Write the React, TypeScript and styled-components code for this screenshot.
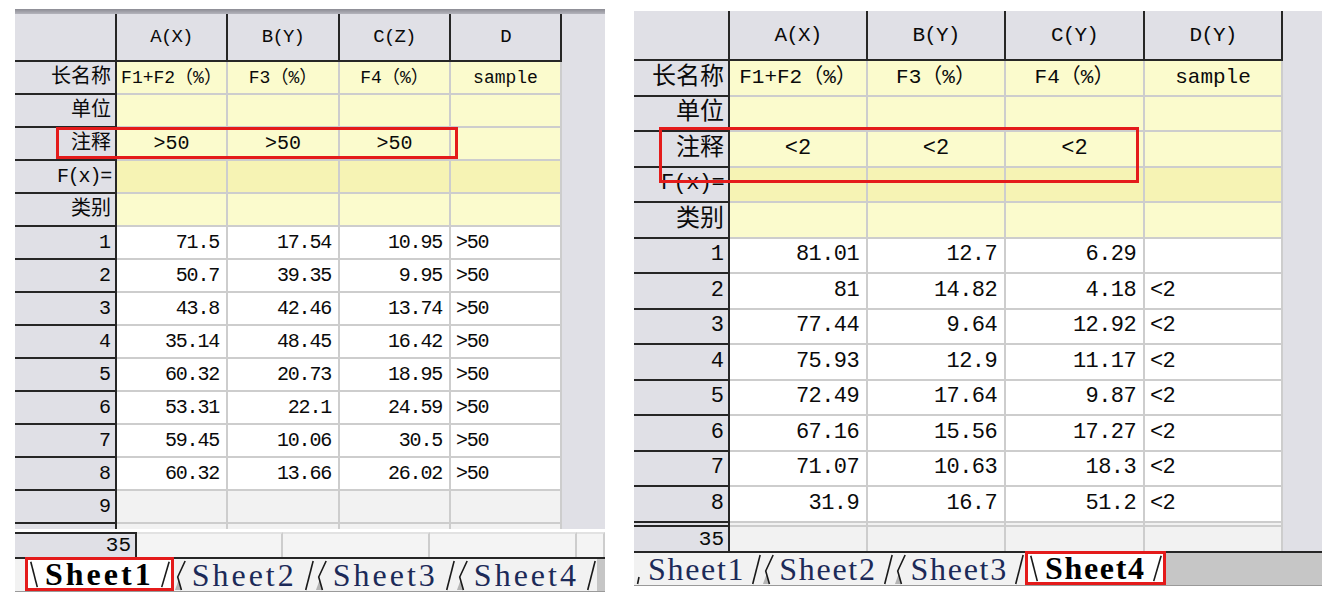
import React, { Fragment } from 'react'
import styled, { createGlobalStyle } from 'styled-components'

type Align = 'left' | 'center' | 'right'
type Kind = 'corner' | 'colhead' | 'rowhead' | 'meta' | 'fx' | 'data' | 'blank'
type EdgeKind = 'slash' | 'back' | 'curl' | 'tick'

interface TabInfo {
  name: string
  lead: EdgeKind
  selected?: boolean
}

interface Sheet {
  top: number
  width: number
  cols: number[]
  rows: string
  headFont: number
  metaFont: number
  labelFont: number
  numFont: number
  numSpacing: number
  heads: string[]
  longNames: string[]
  notes: string[]
  data: string[][]
  tabs: TabInfo[]
  tabSpacing: number
  tabPad: number
  tabSelPad: number
  tabLead: number
  box: { x: number; y: number; w: number; h: number }
}

const LABELS = ['长名称', '单位', '注释', 'F(x)=', '类别']
const isCjk = (s: string) => /[\u4e00-\u9fff]/.test(s)

const palette = {
  head: '#e0e0e6',
  meta: '#fbfbcd',
  fx: '#f6f3b4',
  data: '#ffffff',
  blank: '#f2f2f2',
  dark: '#262626',
  line: '#cdcdcd',
  red: '#e41b1b'
}

const bgFor = (k: Kind) =>
  k === 'meta' ? palette.meta
    : k === 'fx' ? palette.fx
    : k === 'data' ? palette.data
    : k === 'blank' ? palette.blank
    : palette.head

const isHead = (k: Kind) => k === 'corner' || k === 'colhead' || k === 'rowhead'

const leftSheet: Sheet = {
  top: 9,
  width: 590,
  cols: [102, 111, 112, 111, 111, 43],
  rows: '48px repeat(14, 33px) 5px',
  headFont: 19,
  metaFont: 18,
  labelFont: 20,
  numFont: 20,
  numSpacing: -1.2,
  heads: ['A(X)', 'B(Y)', 'C(Z)', 'D'],
  longNames: ['F1+F2（%）', 'F3（%）', 'F4（%）', 'sample'],
  notes: ['>50', '>50', '>50', ''],
  data: [
    ['71.5', '17.54', '10.95', '>50'],
    ['50.7', '39.35', '9.95', '>50'],
    ['43.8', '42.46', '13.74', '>50'],
    ['35.14', '48.45', '16.42', '>50'],
    ['60.32', '20.73', '18.95', '>50'],
    ['53.31', '22.1', '24.59', '>50'],
    ['59.45', '10.06', '30.5', '>50'],
    ['60.32', '13.66', '26.02', '>50']
  ],
  tabs: [
    { name: 'Sheet1', lead: 'back', selected: true },
    { name: 'Sheet2', lead: 'curl' },
    { name: 'Sheet3', lead: 'curl' },
    { name: 'Sheet4', lead: 'curl' }
  ],
  tabSpacing: 3,
  tabPad: 5,
  tabSelPad: 4,
  tabLead: 10,
  box: { x: 41, y: 118, w: 402, h: 32 }
}

const rightSheet: Sheet = {
  top: 11,
  width: 688,
  cols: [96, 138, 138, 139, 138, 39],
  rows: '50px repeat(13, 35.5px) 4.5px 24px',
  headFont: 21,
  metaFont: 21,
  labelFont: 24,
  numFont: 22,
  numSpacing: -0.6,
  heads: ['A(X)', 'B(Y)', 'C(Y)', 'D(Y)'],
  longNames: ['F1+F2（%）', 'F3（%）', 'F4（%）', 'sample'],
  notes: ['<2', '<2', '<2', ''],
  data: [
    ['81.01', '12.7', '6.29', ''],
    ['81', '14.82', '4.18', '<2'],
    ['77.44', '9.64', '12.92', '<2'],
    ['75.93', '12.9', '11.17', '<2'],
    ['72.49', '17.64', '9.87', '<2'],
    ['67.16', '15.56', '17.27', '<2'],
    ['71.07', '10.63', '18.3', '<2'],
    ['31.9', '16.7', '51.2', '<2']
  ],
  tabs: [
    { name: 'Sheet1', lead: 'tick' },
    { name: 'Sheet2', lead: 'curl' },
    { name: 'Sheet3', lead: 'curl' },
    { name: 'Sheet4', lead: 'back', selected: true }
  ],
  tabSpacing: 1.7,
  tabPad: 4,
  tabSelPad: 4,
  tabLead: 0,
  box: { x: 25, y: 116, w: 480, h: 56 }
}

const GlobalStyle = createGlobalStyle`
  html, body { margin: 0; padding: 0; background: #ffffff; }
  body { font-family: "Liberation Mono", "Noto Sans CJK SC", monospace; color: #111; }
`

const Page = styled.div`
  display: flex;
  align-items: flex-start;
  gap: 29px;
  padding-left: 15px;
`

const Panel = styled.section<{ $top: number; $width: number }>`
  position: relative;
  flex: none;
  width: ${p => p.$width}px;
  margin-top: ${p => p.$top}px;
`

const TopBar = styled.div`
  height: 5px;
  background: linear-gradient(#8c8c94, #b4b4bc);
`

const Grid = styled.div<{ $cols: number[]; $rows: string }>`
  display: grid;
  grid-template-columns: ${p => p.$cols.map(c => `${c}px`).join(' ')};
  grid-template-rows: ${p => p.$rows};
`

const Filler = styled.div`
  grid-column: 6;
  grid-row: 1 / -1;
  background: ${palette.head};
`

const Cell = styled.div<{ $kind: Kind; $align?: Align; $size?: number; $spacing?: number; $open?: boolean }>`
  display: flex;
  align-items: center;
  justify-content: ${p => (p.$align === 'left' ? 'flex-start' : p.$align === 'right' ? 'flex-end' : 'center')};
  padding: ${p =>
    p.$kind === 'rowhead' ? '0 4px 0 0' : p.$align === 'left' ? '0 0 0 5px' : p.$align === 'right' ? '0 7px 0 0' : '0'};
  box-sizing: border-box;
  overflow: hidden;
  white-space: nowrap;
  line-height: 1;
  text-spacing-trim: space-all;
  font-size: ${p => p.$size ?? 18}px;
  letter-spacing: ${p => p.$spacing ?? 0}px;
  color: #0a0a0a;
  background: ${p => bgFor(p.$kind)};
  border-right: 2px solid ${p => (isHead(p.$kind) ? palette.dark : palette.line)};
  border-bottom: ${p => (p.$open ? 'none' : `2px solid ${isHead(p.$kind) ? palette.dark : palette.line}`)};
`

const FootRow = styled.div`
  display: grid;
  grid-template-columns: 122px 146px 147px 147px 28px;
  height: 25px;
  margin-top: 3px;
`

const FootHead = styled(Cell)`
  border-top: 2px solid ${palette.dark};
`

const FootCell = styled(Cell)`
  border-top: 2px solid #e2e2e2;
  background: #f4f4f4;
`

const TabStrip = styled.div<{ $lead: number }>`
  display: flex;
  align-items: stretch;
  height: 35px;
  box-sizing: border-box;
  padding-left: ${p => p.$lead}px;
  background: #f2f2f2;
  border-top: 2px solid ${palette.dark};
  border-bottom: 1px solid #9a9a9a;
`

const Tab = styled.div<{ $selected?: boolean }>`
  display: flex;
  align-items: stretch;
  flex: none;
  box-sizing: border-box;
  margin-top: ${p => (p.$selected ? '-2px' : '0')};
  border: ${p => (p.$selected ? `3px solid ${palette.red}` : 'none')};
  background: ${p => (p.$selected ? '#ffffff' : 'transparent')};
`

const TabLabel = styled.span<{ $selected?: boolean; $spacing: number; $pad: number }>`
  display: flex;
  align-items: center;
  padding: 0 ${p => p.$pad}px;
  font-family: "Liberation Serif", serif;
  font-size: 32px;
  line-height: 1;
  letter-spacing: ${p => p.$spacing}px;
  font-weight: ${p => (p.$selected ? 700 : 400)};
  color: ${p => (p.$selected ? '#000000' : '#1c2a58')};
`

const TabFill = styled.div`
  flex: 1;
  background: #c6c6c6;
`

const EdgeSvg = styled.svg<{ $w: number }>`
  flex: none;
  width: ${p => p.$w}px;
  height: 100%;
  overflow: visible;
`

const Highlight = styled.div<{ $x: number; $y: number; $w: number; $h: number }>`
  position: absolute;
  left: ${p => p.$x}px;
  top: ${p => p.$y}px;
  width: ${p => p.$w}px;
  height: ${p => p.$h}px;
  box-sizing: border-box;
  border: 3px solid ${palette.red};
  pointer-events: none;
`

const Edge = ({ kind, w }: { kind: EdgeKind; w: number }) => (
  <EdgeSvg $w={w} viewBox="0 0 14 32" preserveAspectRatio="none" fill="none" stroke="#1a1a1a" strokeWidth={1.6}>
    {kind === 'slash' && <path d="M12 2 L4 31" vectorEffect="non-scaling-stroke" />}
    {kind === 'back' && <path d="M3 2 L10 31" vectorEffect="non-scaling-stroke" />}
    {kind === 'curl' && (
      <>
        <path d="M1 31 L5 21 L8 31 Z" fill="#b4b4b4" stroke="none" />
        <path d="M12 2 L4 18 L8 31" vectorEffect="non-scaling-stroke" />
      </>
    )}
    {kind === 'tick' && <path d="M7 24 L5 31" vectorEffect="non-scaling-stroke" />}
  </EdgeSvg>
)

const Tabs = ({ sheet }: { sheet: Sheet }) => (
  <TabStrip $lead={sheet.tabLead}>
    {sheet.tabs.map(t => (
      <Tab key={t.name} $selected={t.selected}>
        <Edge kind={t.lead} w={t.lead === 'tick' ? 10 : 13} />
        <TabLabel $selected={t.selected} $spacing={sheet.tabSpacing} $pad={t.selected ? sheet.tabSelPad : sheet.tabPad}>
          {t.name}
        </TabLabel>
        <Edge kind="slash" w={13} />
      </Tab>
    ))}
    <TabFill />
  </TabStrip>
)

const SheetGrid = ({ sheet, children }: { sheet: Sheet; children?: React.ReactNode }) => (
  <Grid $cols={sheet.cols} $rows={sheet.rows}>
    <Filler />
    <Cell $kind="corner" />
    {sheet.heads.map(h => (
      <Cell key={h} $kind="colhead" $size={sheet.headFont} $spacing={-0.8}>
        {h}
      </Cell>
    ))}
    {LABELS.map((label, r) => (
      <Fragment key={label}>
        <Cell
          $kind="rowhead"
          $align="right"
          $size={isCjk(label) ? sheet.labelFont : sheet.numFont}
          $spacing={isCjk(label) ? 0 : sheet.numSpacing}
        >
          {label}
        </Cell>
        {[0, 1, 2, 3].map(c => (
          <Cell
            key={c}
            $kind={label === 'F(x)=' ? 'fx' : 'meta'}
            $size={r === 2 ? sheet.numFont : sheet.metaFont}
          >
            {r === 0 ? sheet.longNames[c] : r === 2 ? sheet.notes[c] : ''}
          </Cell>
        ))}
      </Fragment>
    ))}
    {sheet.data.map((row, r) => (
      <Fragment key={r}>
        <Cell $kind="rowhead" $align="right" $size={sheet.numFont}>
          {r + 1}
        </Cell>
        {row.map((v, c) => (
          <Cell
            key={c}
            $kind="data"
            $align={c === 3 ? 'left' : 'right'}
            $size={sheet.numFont}
            $spacing={sheet.numSpacing}
          >
            {v}
          </Cell>
        ))}
      </Fragment>
    ))}
    {children}
  </Grid>
)

const BlankRow = ({ label, size, open }: { label?: string; size: number; open?: boolean }) => (
  <>
    <Cell $kind="rowhead" $align="right" $size={size} $open={open}>
      {label}
    </Cell>
    {[0, 1, 2, 3].map(c => (
      <Cell key={c} $kind="blank" $open={open} />
    ))}
  </>
)

const LeftSheet = () => {
  const s = leftSheet
  return (
    <Panel $top={s.top} $width={s.width}>
      <TopBar />
      <SheetGrid sheet={s}>
        <BlankRow label="9" size={s.numFont} />
        <BlankRow size={s.numFont} open />
      </SheetGrid>
      <FootRow>
        <FootHead $kind="rowhead" $align="right" $size={21} $open>
          35
        </FootHead>
        <FootCell $kind="blank" $open />
        <FootCell $kind="blank" $open />
        <FootCell $kind="blank" $open />
        <FootCell $kind="blank" $open />
      </FootRow>
      <Tabs sheet={s} />
      <Highlight $x={s.box.x} $y={s.box.y} $w={s.box.w} $h={s.box.h} />
    </Panel>
  )
}

const RightSheet = () => {
  const s = rightSheet
  return (
    <Panel $top={s.top} $width={s.width}>
      <SheetGrid sheet={s}>
        <BlankRow size={s.numFont} />
        <BlankRow label="35" size={21} open />
      </SheetGrid>
      <Tabs sheet={s} />
      <Highlight $x={s.box.x} $y={s.box.y} $w={s.box.w} $h={s.box.h} />
    </Panel>
  )
}

const App = () => {
  return (
    <Page>
      <GlobalStyle />
      <LeftSheet />
      <RightSheet />
    </Page>
  )
}

export default App
